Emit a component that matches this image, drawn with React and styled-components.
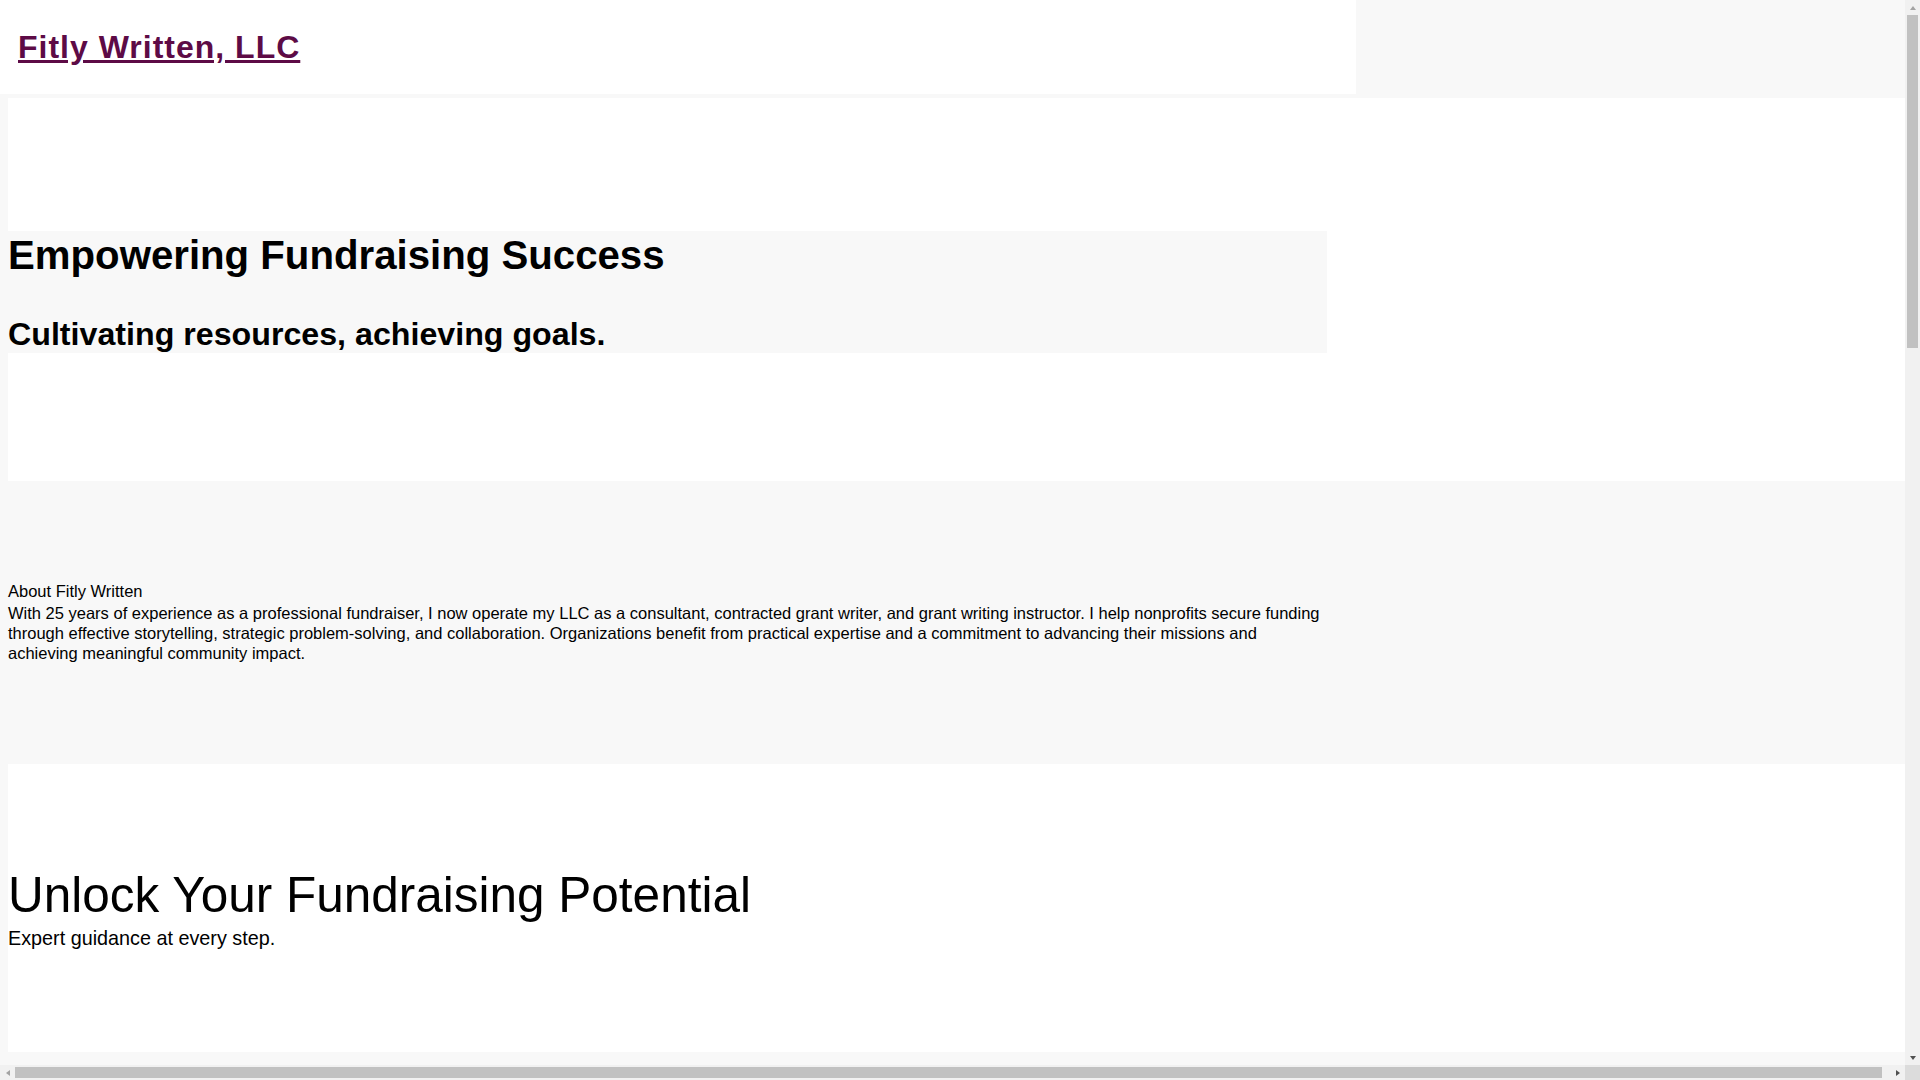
import React from "react";
import styled, { createGlobalStyle } from "styled-components";

const GlobalStyle = createGlobalStyle`
  html, body {
    margin: 0;
    padding: 0;
  }
  body {
    background: #f8f8f8;
    font-family: "Liberation Sans", Arial, sans-serif;
    font-size: 16.5px;
    color: #000;
  }
`;

function App() {
  return (
    <>
      <GlobalStyle />
      <Header>
        <Brand href="#">Fitly Written, LLC</Brand>
      </Header>
      <Main>
        <Hero>
          <HeroBox>
            <HeroTitle>Empowering Fundraising Success</HeroTitle>
            <HeroSub>Cultivating resources, achieving goals.</HeroSub>
          </HeroBox>
        </Hero>

        <Band>
          <BandInner>
            <BandTitle>About Fitly Written</BandTitle>
            <BandText>
              With 25 years of experience as a professional fundraiser, I now
              operate my LLC as a consultant, contracted grant writer, and grant
              writing instructor. I help nonprofits secure funding through
              effective storytelling, strategic problem-solving, and
              collaboration. Organizations benefit from practical expertise and a
              commitment to advancing their missions and achieving meaningful
              community impact.
            </BandText>
          </BandInner>
        </Band>

        <Callout>
          <CalloutTitle>Unlock Your Fundraising Potential</CalloutTitle>
          <CalloutSub>Expert guidance at every step.</CalloutSub>
        </Callout>

        <Band>
          <BandInner>
            <BandTitle>Services</BandTitle>
            <ServiceList>
              <li>Grant research and prospect identification</li>
              <li>Grant proposal writing and editing</li>
              <li>Fundraising strategy and planning</li>
              <li>Grant writing workshops and instruction</li>
            </ServiceList>
          </BandInner>
        </Band>

        <Callout $tall>
          <CalloutTitle>Let's Work Together</CalloutTitle>
          <CalloutSub>Reach out to start the conversation.</CalloutSub>
        </Callout>

        <Footer>© Fitly Written, LLC. All rights reserved.</Footer>
      </Main>

      {/* classic window scrollbars, as in the captured browser */}
      <VScroll>
        <Arrow $dir="up" />
        <VThumb />
        <Track />
        <Arrow $dir="down" $dark />
      </VScroll>
      <HScroll>
        <Arrow $dir="left" />
        <HThumb />
        <Track />
        <Arrow $dir="right" $dark />
      </HScroll>
      <Corner />
    </>
  );
}

export default App;

const Header = styled.header`
  width: 1356px;
  height: 94px;
  box-sizing: border-box;
  padding: 29px 0 0 18px;
  background: #fff;
  margin-bottom: 4px;
`;

const Brand = styled.a`
  font-family: "Liberation Sans", Arial, sans-serif;
  font-size: 32px;
  font-weight: 700;
  letter-spacing: 1px;
  color: #5d0b46;
  text-decoration: underline;
`;

const Main = styled.main`
  padding-left: 8px;
`;

const Hero = styled.section`
  padding: 133px 0 128px;
  background: #fff;
`;

const HeroBox = styled.div`
  width: 1319px;
  background: #f8f8f8;
  padding-top: 2px;
`;

const HeroTitle = styled.h1`
  margin: 0;
  font-size: 40.2px;
  font-weight: 700;
`;

const HeroSub = styled.h2`
  margin: 37px 0 0;
  font-size: 32.2px;
  font-weight: 700;
  line-height: 37px;
`;

const Band = styled.section`
  padding: 100px 0 101px;
`;

const BandInner = styled.div`
  width: 1319px;
`;

const BandTitle = styled.h3`
  margin: 0 0 2px;
  font-size: 16.5px;
  font-weight: 400;
  line-height: 20px;
`;

const BandText = styled.p`
  margin: 0;
  font-size: 16.5px;
  line-height: 20px;
`;

const ServiceList = styled.ul`
  margin: 0;
  padding-left: 20px;
  font-size: 16.5px;
  line-height: 20px;
`;

const Callout = styled.section`
  padding: ${(p) => (p.$tall ? "160px 0" : "102px 0")};
  background: #fff;
`;

const CalloutTitle = styled.h2`
  margin: 0;
  font-size: 49.5px;
  font-weight: 300;
  line-height: 57px;
`;

const CalloutSub = styled.p`
  margin: 4px 0 0;
  font-size: 19.8px;
  line-height: 23px;
`;

const Footer = styled.footer`
  height: 1200px;
  padding-top: 120px;
  font-size: 14px;
  color: #444;
`;

const VScroll = styled.div`
  position: fixed;
  top: 0;
  right: 0;
  width: 15px;
  height: calc(100vh - 15px);
  display: flex;
  flex-direction: column;
  background: #f1f1f1;
`;

const HScroll = styled.div`
  position: fixed;
  left: 0;
  bottom: 0;
  width: calc(100vw - 15px);
  height: 15px;
  display: flex;
  background: #f1f1f1;
`;

const Corner = styled.div`
  position: fixed;
  right: 0;
  bottom: 0;
  width: 15px;
  height: 15px;
  background: #dcdcdc;
`;

const Track = styled.div`
  flex: 1;
`;

const VThumb = styled.div`
  flex: 0 0 333px;
  margin: 0 2px;
  background: #c1c1c1;
`;

const HThumb = styled.div`
  flex: 0 0 1867px;
  margin: 2px 0;
  background: #c1c1c1;
`;

const triangle = {
  up: "border-width: 0 3.5px 4px; border-color: transparent transparent currentColor;",
  down: "border-width: 4px 3.5px 0; border-color: currentColor transparent transparent;",
  left: "border-width: 3.5px 4px 3.5px 0; border-color: transparent currentColor transparent transparent;",
  right: "border-width: 3.5px 0 3.5px 4px; border-color: transparent transparent transparent currentColor;",
};

const Arrow = styled.div`
  flex: 0 0 15px;
  width: 15px;
  height: 15px;
  display: flex;
  align-items: center;
  justify-content: center;
  color: ${(p) => (p.$dark ? "#505050" : "#a3a3a3")};

  &::before {
    content: "";
    width: 0;
    height: 0;
    border-style: solid;
    ${(p) => triangle[p.$dir]}
  }
`;
